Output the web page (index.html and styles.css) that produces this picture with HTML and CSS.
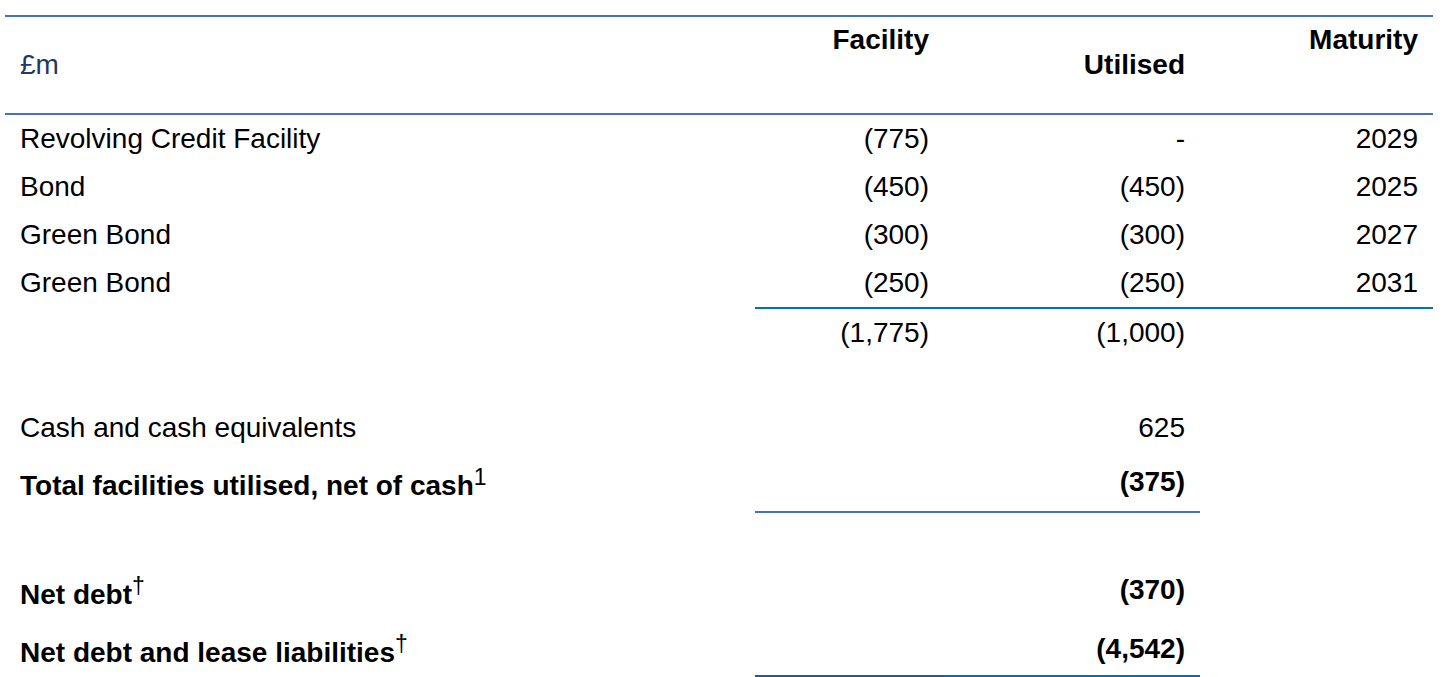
FILE: index.html
```html
<!DOCTYPE html>
<html lang="en">
<head>
<meta charset="utf-8">
<title>Facilities</title>
<link rel="stylesheet" href="styles.css">
</head>
<body>
<table class="debt">
  <colgroup>
    <col class="c-label">
    <col class="c-fac">
    <col class="c-util">
    <col class="c-mat">
  </colgroup>
  <thead>
    <tr class="r-head">
      <th class="unit">£m</th>
      <th class="num hi">Facility</th>
      <th class="num lo">Utilised</th>
      <th class="num hi">Maturity</th>
    </tr>
  </thead>
  <tbody>
    <tr class="r-row">
      <td class="label">Revolving Credit Facility</td>
      <td class="num">(775)</td>
      <td class="num">-</td>
      <td class="num">2029</td>
    </tr>
    <tr class="r-row">
      <td class="label">Bond</td>
      <td class="num">(450)</td>
      <td class="num">(450)</td>
      <td class="num">2025</td>
    </tr>
    <tr class="r-row">
      <td class="label">Green Bond</td>
      <td class="num">(300)</td>
      <td class="num">(300)</td>
      <td class="num">2027</td>
    </tr>
    <tr class="r-last">
      <td class="label rule-none">Green Bond</td>
      <td class="num rule-b">(250)</td>
      <td class="num rule-b">(250)</td>
      <td class="num rule-b">2031</td>
    </tr>
    <tr class="r-row">
      <td class="label"></td>
      <td class="num">(1,775)</td>
      <td class="num">(1,000)</td>
      <td class="num"></td>
    </tr>
    <tr class="r-gap1"><td colspan="4"></td></tr>
    <tr class="r-row">
      <td class="label">Cash and cash equivalents</td>
      <td class="num"></td>
      <td class="num">625</td>
      <td class="num"></td>
    </tr>
    <tr class="r-tot">
      <td class="label strong rule-none">Total facilities utilised, net of cash<sup class="note">1</sup></td>
      <td class="num rule-a"></td>
      <td class="num strong rule-a">(375)</td>
      <td class="num rule-none"></td>
    </tr>
    <tr class="r-gap2"><td colspan="4"></td></tr>
    <tr class="r-row">
      <td class="label strong">Net debt<sup class="note">†</sup></td>
      <td class="num"></td>
      <td class="num strong">(370)</td>
      <td class="num"></td>
    </tr>
    <tr class="r-end">
      <td class="label strong rule-none">Net debt and lease liabilities<sup class="note">†</sup></td>
      <td class="num rule-d"></td>
      <td class="num strong rule-b">(4,542)</td>
      <td class="num rule-none"></td>
    </tr>
  </tbody>
</table>
</body>
</html>
```

FILE: styles.css
```css
html, body {
  margin: 0;
  padding: 0;
  background: #ffffff;
}

body {
  font-family: "Liberation Sans", Arial, sans-serif;
  font-size: 28px;
  line-height: 32px;
  color: #000000;
}

th, td {
  padding: 0;
  font-weight: normal;
  vertical-align: middle;
  white-space: nowrap;
}

.debt {
  margin: 15px 0 0 5px;
  border-collapse: separate;
  border-spacing: 0;
  table-layout: fixed;
  width: 1428px;
}

.c-label { width: 750px; }
.c-fac { width: 189px; }
.c-util { width: 256px; }
.c-mat { width: 233px; }

.r-head { height: 100px; }
.r-head th {
  border-top: 2px solid #4472c4;
  border-bottom: 2px solid #4472c4;
  vertical-align: top;
  font-weight: bold;
}
.r-head .unit {
  text-align: left;
  padding-left: 15px;
  color: #1f3864;
  font-weight: normal;
  vertical-align: middle;
}
.r-head .hi { padding-top: 7px; }
.r-head .lo { padding-top: 32px; }

.r-row { height: 48px; }
.r-last { height: 50px; }
.r-gap1 { height: 47px; }
.r-tot { height: 61px; }
.r-gap2 { height: 53px; }
.r-end { height: 63px; }
.r-end td { padding-top: 8px; }

.label {
  text-align: left;
  padding-left: 15px;
}

.num {
  text-align: right;
  padding-right: 15px;
}

.strong { font-weight: bold; }

.note {
  font-weight: normal;
  font-size: 23px;
  vertical-align: 10px;
  line-height: inherit;
}

.rule-none { border-bottom: 2px solid transparent; }
.rule-b { border-bottom: 2px solid #0070c0; }
.rule-a { border-bottom: 2px solid #4472c4; }
.rule-d { border-bottom: 2px solid #1f5c8f; }
```
